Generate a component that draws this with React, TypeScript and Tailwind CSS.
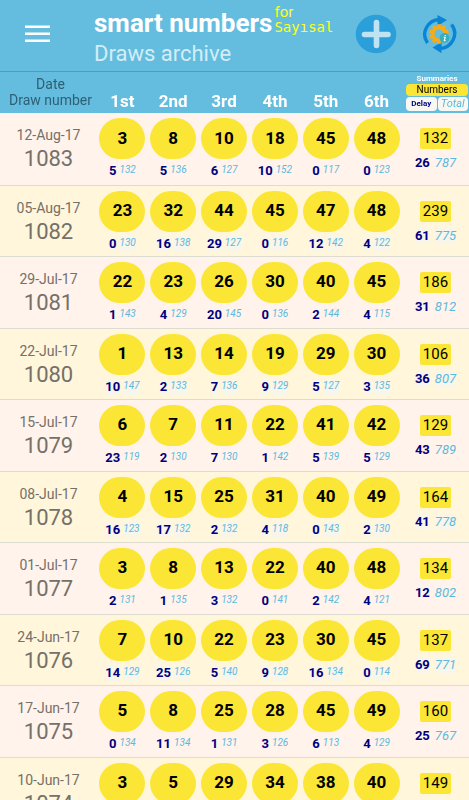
import { clsx } from "clsx";

type Pick = [number: number, delay: number, total: number];

type Draw = {
    date: string;
    id: number;
    picks: Pick[];
    sum: number;
    delay: number;
    total: number;
}

const columns = ["1st", "2nd", "3rd", "4th", "5th", "6th"];

const draws: Draw[] = [
    { date: "12-Aug-17", id: 1083, picks: [[3, 5, 132], [8, 5, 136], [10, 6, 127], [18, 10, 152], [45, 0, 117], [48, 0, 123]], sum: 132, delay: 26, total: 787 },
    { date: "05-Aug-17", id: 1082, picks: [[23, 0, 130], [32, 16, 138], [44, 29, 127], [45, 0, 116], [47, 12, 142], [48, 4, 122]], sum: 239, delay: 61, total: 775 },
    { date: "29-Jul-17", id: 1081, picks: [[22, 1, 143], [23, 4, 129], [26, 20, 145], [30, 0, 136], [40, 2, 144], [45, 4, 115]], sum: 186, delay: 31, total: 812 },
    { date: "22-Jul-17", id: 1080, picks: [[1, 10, 147], [13, 2, 133], [14, 7, 136], [19, 9, 129], [29, 5, 127], [30, 3, 135]], sum: 106, delay: 36, total: 807 },
    { date: "15-Jul-17", id: 1079, picks: [[6, 23, 119], [7, 2, 130], [11, 7, 130], [22, 1, 142], [41, 5, 139], [42, 5, 129]], sum: 129, delay: 43, total: 789 },
    { date: "08-Jul-17", id: 1078, picks: [[4, 16, 123], [15, 17, 132], [25, 2, 132], [31, 4, 118], [40, 0, 143], [49, 2, 130]], sum: 164, delay: 41, total: 778 },
    { date: "01-Jul-17", id: 1077, picks: [[3, 2, 131], [8, 1, 135], [13, 3, 132], [22, 0, 141], [40, 2, 142], [48, 4, 121]], sum: 134, delay: 12, total: 802 },
    { date: "24-Jun-17", id: 1076, picks: [[7, 14, 129], [10, 25, 126], [22, 5, 140], [23, 9, 128], [30, 16, 134], [45, 0, 114]], sum: 137, delay: 69, total: 771 },
    { date: "17-Jun-17", id: 1075, picks: [[5, 0, 134], [8, 11, 134], [25, 1, 131], [28, 3, 126], [45, 6, 113], [49, 4, 129]], sum: 160, delay: 25, total: 767 },
    { date: "10-Jun-17", id: 1074, picks: [[3, 9, 130], [5, 0, 133], [29, 8, 126], [34, 2, 131], [38, 7, 124], [40, 2, 141]], sum: 149, delay: 28, total: 785 },
];

const MenuIcon = () => (
    <svg viewBox="0 0 26 20" className="w-[26px] h-5" fill="#fff">
        <path d="M1 1.5h25v2.6H1zM1 8.5h25v2.6H1zM1 15.5h25v2.6H1z" />
    </svg>
);

const PlusIcon = () => (
    <svg viewBox="0 0 42 40" className="w-[42px] h-10">
        <ellipse cx="21" cy="20" rx="20.3" ry="19.2" fill="#2b9fd9" />
        <path d="M21.5 8.500V31.500M9.500 20.500H33" stroke="#bfe3f2" strokeWidth="5.600" strokeLinecap="round" />
    </svg>
);

const gearTeeth = [0, 36, 72, 108, 144, 180, 216, 252, 288, 324];

const SyncIcon = () => (
    <svg viewBox="0 0 36 38" className="w-9 h-[38px]">
        <g fill="none" stroke="#0a84d6" strokeWidth="3.4">
            <path d="M6.500 28A15.500 15 0 0 1 18.500 4.500" />
            <path d="M30.500 9.500A15.500 15 0 0 1 18.500 33.500" />
        </g>
        <path d="M16.500 0l9.500 5-9.500 6z" fill="#0a84d6" />
        <path d="M20.500 27v11.200L11.500 32.500z" fill="#0a84d6" />
        <g fill="#fbab12">
            {gearTeeth.map(angle => (
                <rect key={angle} x="16.200" y="9.200" width="3.600" height="4" transform={`rotate(${angle} 18 19)`} />
            ))}
        </g>
        <circle cx="18" cy="19" r="6.300" fill="none" stroke="#fbab12" strokeWidth="3.400" />
        <circle cx="23.500" cy="23" r="4.900" fill="#38aebd" />
        <path d="M24.300 20v1M22.800 22.400h1.300l-.8 3.200h1.300" fill="none" stroke="#fff" strokeWidth="1.200" />
    </svg>
);

const Header = () => (
    <header className="flex shrink-0 h-[72px] border-b border-[#4d9dbb] bg-[#64bddf]">
        <button type="button" aria-label="Menu" className="flex w-[94px] h-[68px] pl-6 items-center">
            <MenuIcon />
        </button>
        <div className="flex-1 pt-2">
            <div className="flex gap-[2px] whitespace-nowrap">
                <h1 className="text-[26px] leading-[30px] font-bold text-white">smart numbers</h1>
                <p className="-mt-1 text-[#ffff1a]">
                    <span className="block text-[15px] leading-4">for</span>
                    <span className="block font-['DejaVu_Sans_Mono',monospace] text-sm leading-[14px]">Sayısal</span>
                </p>
            </div>
            <p className="text-[22px] leading-8 text-[#d3edf7]">Draws archive</p>
        </div>
        <div className="flex items-center h-[68px] gap-6 pr-3">
            <button type="button" aria-label="Add draw"><PlusIcon /></button>
            <button type="button" aria-label="Update draws"><SyncIcon /></button>
        </div>
    </header>
);

const PickCell = ({ pick, shaded }: { pick: Pick; shaded: boolean }) => {
    const [number, delay, total] = pick;

    return (
        <td className="pt-[5px] align-top">
            <div className="flex items-center justify-center mx-auto w-[46px] h-[41px] rounded-full bg-[#fbe636] text-[17px] font-bold text-black">
                {number}
            </div>
            <div className="flex justify-center gap-[3px] mt-1 leading-4">
                <span className={clsx("rounded-sm text-[13px] font-bold text-[#000080]", shaded && "bg-[#f8f5ea]")}>{delay}</span>
                <span className={clsx("rounded-sm text-[10px] leading-[14px] italic text-[#5cb9dd]", shaded && "bg-[#f8f5ea]")}>{total}</span>
            </div>
        </td>
    );
}

const DrawRow = ({ draw, shaded }: { draw: Draw; shaded: boolean }) => (
    <tr className={clsx("border-b border-[#dcdcd0]", shaded ? "h-[71px] bg-[#fff6db]" : "h-[72px] bg-[#fff3ec]")}>
        <th scope="row" className="pt-3 align-top font-normal text-[#757068]">
            <span className="block text-sm leading-5">{draw.date}</span>
            <span className="block text-[22px] leading-7">{draw.id}</span>
        </th>
        {draw.picks.map((pick, i) => <PickCell key={i} pick={pick} shaded={shaded} />)}
        <td className="pt-[15px] align-top text-center">
            <span className="inline-block px-[3px] rounded-xs bg-[#fbe636] text-[15px] leading-[21px] align-top text-black">{draw.sum}</span>
            <div className="flex justify-center gap-[5px] mt-[3px] text-[13px] leading-4">
                <span className={clsx("rounded-sm font-bold text-[#000080]", shaded && "bg-[#f8f5ea]")}>{draw.delay}</span>
                <span className={clsx("rounded-sm italic text-[#5cb9dd]", shaded && "bg-[#f8f5ea]")}>{draw.total}</span>
            </div>
        </td>
    </tr>
);

const App = () => {
    return (
        <div className="flex flex-col h-screen overflow-hidden bg-[#64bddf] font-[Roboto,sans-serif]">
            <Header />
            <main className="flex-1 min-h-0 overflow-y-auto [scrollbar-width:none]">
                <table className="w-full table-fixed border-collapse">
                    <colgroup>
                        <col className="w-[97px]" />
                        <col span={6} />
                        <col className="w-[67px]" />
                    </colgroup>
                    <thead className="sticky top-0 z-10">
                        <tr className="h-[41px] bg-[#64bddf]">
                            <th scope="col" className="pt-1 pl-1 align-top text-sm leading-4 font-normal text-[#2f5f75]">
                                Date<br />Draw number
                            </th>
                            {columns.map(column => (
                                <th key={column} scope="col" className="pb-[2px] align-bottom text-[17px] leading-5 font-bold text-white">{column}</th>
                            ))}
                            <th scope="col" className="pl-1 pr-[1px] pt-[2px] align-top font-normal">
                                <span className="block text-[8px] leading-[9px] font-bold text-white">Summaries</span>
                                <span className="block mt-[1px] rounded-sm bg-[#fbe636] text-[10px] leading-3 text-black">Numbers</span>
                                <span className="flex gap-[1px] mt-[1px] leading-[14px]">
                                    <span className="flex-1 rounded-sm bg-[#f8f8f2] text-[8px] font-bold text-[#000080]">Delay</span>
                                    <span className="flex-1 rounded-sm bg-[#f8f8f2] text-[11px] italic text-[#5cb9dd]">Total</span>
                                </span>
                            </th>
                        </tr>
                    </thead>
                    <tbody>
                        {draws.map((draw, i) => <DrawRow key={draw.id} draw={draw} shaded={i % 2 === 1} />)}
                    </tbody>
                </table>
            </main>
        </div>
    );
};

export default App;
